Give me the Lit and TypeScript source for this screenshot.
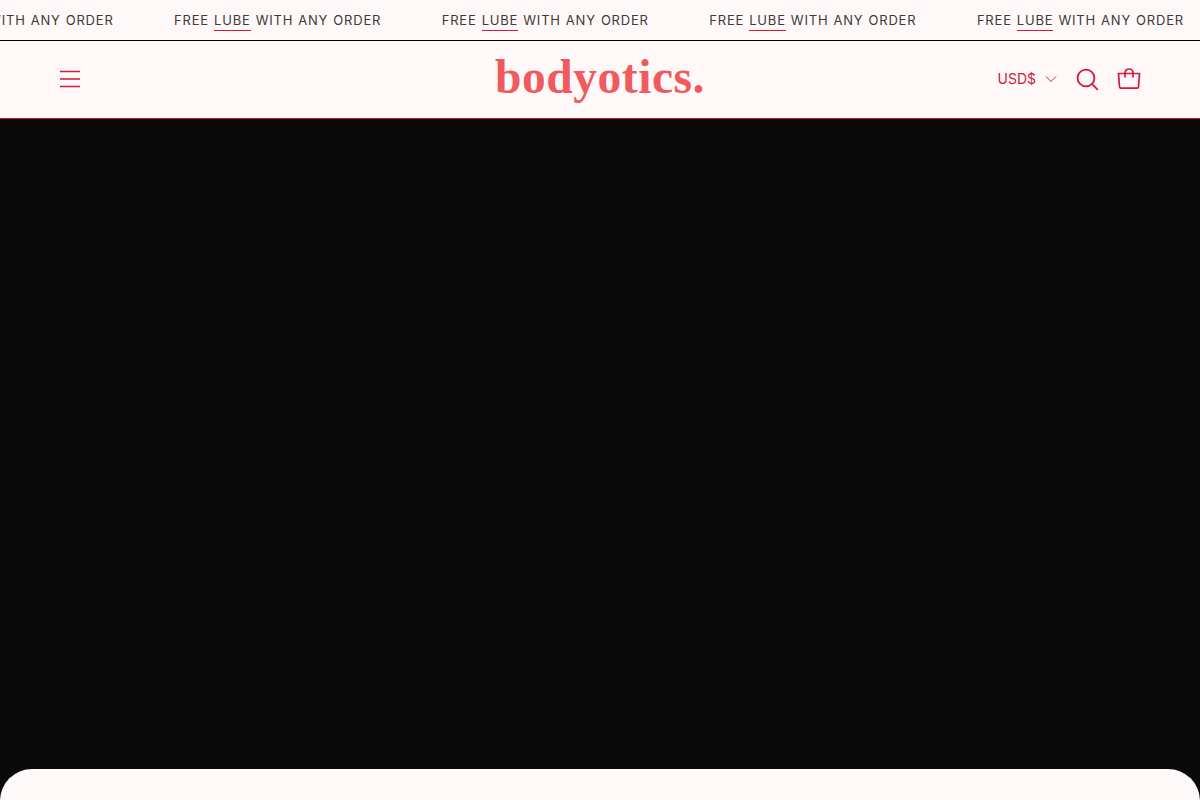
import { LitElement, html, css } from "lit";
import { customElement } from "lit/decorators.js";

const ITEMS = [0, 1, 2, 3, 4];

@customElement("app-root")
export class AppRoot extends LitElement {
  static styles = css`
    :host {
      display: block;
      width: 1200px;
      height: 800px;
      overflow: hidden;
      background: #0a0a0a;
      font-family: Inter, "Liberation Sans", sans-serif;
    }
    .announce {
      height: 40px;
      background: #fff8f8;
      border-bottom: 1px solid #000;
      overflow: hidden;
      display: flex;
      align-items: center;
    }
    .track {
      display: flex;
      gap: 60px;
      margin-left: -93.5px;
      flex: none;
    }
    .msg {
      flex: none;
      width: 207.6px;
      white-space: nowrap;
      font-size: 13px;
      line-height: 22px;
      height: 22px;
      letter-spacing: 0.8px;
      word-spacing: 0.6px;
      color: #3d3a3a;
    }
    .msg u {
      text-decoration: none;
      display: inline-block;
      line-height: 16px;
      padding-bottom: 2px;
      border-bottom: 1px solid #d2193c;
    }
    .header {
      height: 77px;
      background: #fff8f8;
      border-bottom: 1px solid #c4173a;
      padding: 0 59px;
      display: grid;
      grid-template-columns: 1fr auto 1fr;
      align-items: center;
      color: #d2193c;
    }
    .burger { display: block; margin-top: -2px; }
    .logo {
      font-family: "Liberation Serif", serif;
      font-weight: 700;
      font-size: 47.5px;
      line-height: 56px;
      letter-spacing: 0.55px;
      margin-top: -5px;
      color: #f05a5e;
    }
    .tools {
      justify-self: end;
      display: flex;
      align-items: center;
      margin-top: -2px;
    }
    .cur {
      font-size: 14px;
      margin-right: 9px;
    }
    .chev { margin-right: 18px; display: block; }
    .search { margin-right: 18px; display: block; }
    .bag { display: block; }
    .hero {
      height: 650px;
      background: #0a0a0a;
    }
    .next {
      height: 80px;
      background: #fff8f8;
      border-radius: 32px 32px 0 0;
    }
    svg { fill: none; stroke: currentColor; }
  `;

  render() {
    return html`
      <div class="announce">
        <div class="track">
          ${ITEMS.map(
            () => html`<div class="msg">FREE <u>LUBE</u> WITH ANY ORDER</div>`
          )}
        </div>
      </div>
      <div class="header">
        <svg class="burger" width="22" height="18" viewBox="0 0 22 18" stroke-width="1.6">
          <path d="M1 1.5h20M1 9h20M1 16.5h20" />
        </svg>
        <div class="logo">bodyotics.</div>
        <div class="tools">
          <span class="cur">USD$</span>
          <svg class="chev" width="12" height="8" viewBox="0 0 12 8" stroke-width="1">
            <path d="M1 1.5l5 5 5-5" />
          </svg>
          <svg class="search" width="24" height="24" viewBox="0 0 24 24" stroke-width="1.8">
            <circle cx="11" cy="11" r="8.4" />
            <path d="M17.2 17.2l5.6 5.6" />
          </svg>
          <svg class="bag" width="24" height="24" viewBox="0 0 24 24" stroke-width="1.7">
            <path d="M1.5 6.5h21l-1 13.2a1.5 1.5 0 0 1-1.5 1.4H4a1.5 1.5 0 0 1-1.5-1.4z" />
            <path d="M8 10.5V6a4 4 0 0 1 8 0v4.5" />
          </svg>
        </div>
      </div>
      <div class="hero"></div>
      <div class="next"></div>
    `;
  }
}
